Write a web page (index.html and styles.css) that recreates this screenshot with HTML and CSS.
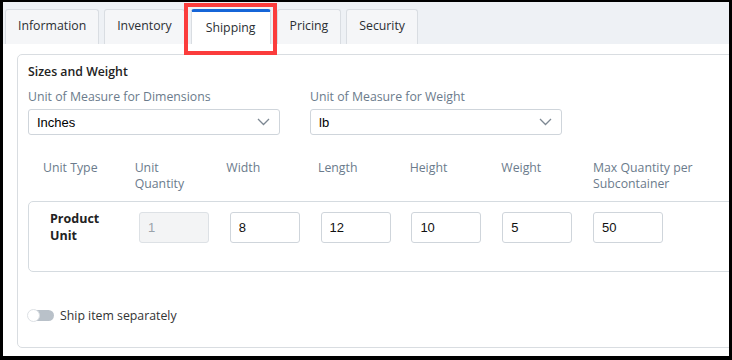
FILE: index.html
```html
<!DOCTYPE html>
<html lang="en">
<head>
    <meta charset="UTF-8">
    <meta name="viewport" content="width=device-width, initial-scale=1.0">
    <title>Item - Shipping</title>
    <link rel="stylesheet" href="styles.css">
</head>
<body>
    <div class="frame">
        <div class="tabs">
            <div class="tab">Information</div>
            <div class="tab">Inventory</div>
            <div class="tab active">Shipping</div>
            <div class="tab">Pricing</div>
            <div class="tab">Security</div>
        </div>
        <div class="highlight"></div>

        <div class="content">
            <div class="card">
                <div class="card-title">Sizes and Weight</div>
                <div class="selects">
                    <div class="field">
                        <label class="label">Unit of Measure for Dimensions</label>
                        <div class="select">
                            <span>Inches</span>
                            <svg class="chevron" width="13" height="8" viewBox="0 0 13 8"><path d="M1 1l5.5 5.5L12 1" fill="none" stroke="#7d8893" stroke-width="1.3"/></svg>
                        </div>
                    </div>
                    <div class="field">
                        <label class="label">Unit of Measure for Weight</label>
                        <div class="select">
                            <span>lb</span>
                            <svg class="chevron" width="13" height="8" viewBox="0 0 13 8"><path d="M1 1l5.5 5.5L12 1" fill="none" stroke="#7d8893" stroke-width="1.3"/></svg>
                        </div>
                    </div>
                </div>

                <div class="grid header">
                    <div>Unit Type</div>
                    <div>Unit<br>Quantity</div>
                    <div>Width</div>
                    <div>Length</div>
                    <div>Height</div>
                    <div>Weight</div>
                    <div>Max Quantity per<br>Subcontainer</div>
                </div>
                <div class="row-box">
                    <div class="row-grid">
                        <div class="unit-name">Product<br>Unit</div>
                        <div><input class="input" value="1" disabled></div>
                        <div><input class="input" value="8"></div>
                        <div><input class="input" value="12"></div>
                        <div><input class="input" value="10"></div>
                        <div><input class="input" value="5"></div>
                        <div><input class="input" value="50"></div>
                    </div>
                </div>

                <div class="toggle-row">
                    <span class="toggle"><span class="knob"></span></span>
                    <span>Ship item separately</span>
                </div>
            </div>
        </div>
    </div>
</body>
</html>
```

FILE: styles.css
```css
body {
    margin: 0;
    background: #000;
    font-family: 'Open Sans', 'Noto Sans', sans-serif;
    font-size: 12.3px;
    color: #333;
}

.frame {
    position: relative;
    margin: 2px 3px 0 3px;
    width: 726px;
    height: 354px;
    background: #fff;
    overflow: hidden;
}

.tabs {
    display: flex;
    align-items: flex-end;
    gap: 5px;
    height: 42px;
    padding-left: 2px;
    background: #eef1f5;
}

.tab {
    height: 35px;
    line-height: 32px;
    padding: 0 12px;
    background: #f5f6f8;
    border: 1px solid #d9dde2;
    border-bottom: none;
    border-radius: 3px 3px 0 0;
    color: #2b2f33;
    box-sizing: border-box;
}

.tab.active {
    background: #fff;
    border-top: 3px solid #1565d8;
    line-height: 32px;
    padding: 0 14px;
    margin: 0 1px;
}

.highlight {
    position: absolute;
    left: 181px;
    top: 1px;
    width: 85px;
    height: 44px;
    border: 4px solid #fb3c3c;
}

.content {
    padding: 10px 0 0 14px;
}

.card {
    width: 760px;
    height: 294px;
    border: 1px solid #d9dde1;
    border-radius: 5px;
    padding: 0 10px;
    box-sizing: border-box;
}

.card-title {
    margin-top: 9px;
    font-weight: 600;
    color: #222;
    line-height: 16px;
}

.selects {
    display: flex;
    gap: 30px;
    margin-top: 9px;
}

.field {
    display: flex;
    flex-direction: column;
    gap: 4px;
}

.label {
    color: #6b7b8c;
    line-height: 16px;
}

.select {
    width: 252px;
    height: 26px;
    box-sizing: border-box;
    border: 1px solid #cfd5db;
    border-radius: 3px;
    display: flex;
    align-items: center;
    justify-content: space-between;
    padding: 0 9px 0 8px;
    font-family: 'Liberation Sans', Arial, sans-serif;
    font-size: 13px;
    color: #000;
}

.grid {
    display: grid;
    grid-template-columns: repeat(7, 91.67px);
    white-space: nowrap;
}

.header {
    margin-top: 25px;
    padding-left: 15px;
    color: #6b7b8c;
    line-height: 16px;
}

.row-box {
    margin-top: 9px;
    height: 71px;
    box-sizing: border-box;
    border: 1px solid #d5dbe0;
    border-radius: 5px;
    padding: 10px 0 0 14px;
}

.row-grid {
    display: grid;
    grid-template-columns: 96px repeat(6, 90.8px);
}

.unit-name {
    margin-top: -2px;
    padding: 0 0 0 7px;
    font-weight: 700;
    color: #222;
    line-height: 17px;
    font-size: 12.5px;
}

.input {
    width: 70px;
    height: 31px;
    box-sizing: border-box;
    border: 1px solid #cfd5db;
    border-radius: 3px;
    padding: 0 8px;
    font-family: 'Liberation Sans', Arial, sans-serif;
    font-size: 13px;
    color: #111;
    background: #fff;
}

.input:disabled {
    background: #f3f4f5;
    color: #9aa3ab;
    border-color: #dde1e5;
}

.toggle-row {
    display: flex;
    align-items: center;
    gap: 6px;
    margin-top: 35px;
    color: #333;
}

.toggle {
    position: relative;
    width: 26px;
    height: 11px;
    border-radius: 6px;
    background: #b9c1c9;
}

.knob {
    position: absolute;
    left: -1px;
    top: -1px;
    width: 11px;
    height: 11px;
    border-radius: 50%;
    background: #fff;
    border: 1px solid #dde1e5;
}
```
